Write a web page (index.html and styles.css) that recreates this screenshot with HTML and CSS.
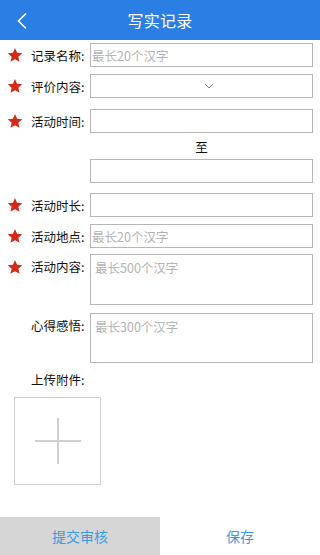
FILE: index.html
```
<!DOCTYPE html>
<html lang="zh">
<head>
<meta charset="utf-8">
<link rel="stylesheet" href="styles.css">
</head>
<body>
<div class="page">
  <header class="topbar">
    <svg class="back" width="12" height="18" viewBox="0 0 12 18"><path d="M10 1.5 L2.5 9 L10 16.5" fill="none" stroke="#fff" stroke-width="1.6"/></svg>
    <div class="title">写实记录</div>
  </header>
  <main class="form">
    <div class="row r1">
      <div class="label"><svg class="star" viewBox="0 0 24 24"><path d="M12 1.5l3.1 7.2 7.8.7-5.9 5.2 1.8 7.7L12 18.2l-6.8 4.1 1.8-7.7-5.9-5.2 7.8-.7z" fill="#d42a1c"/></svg><span>记录名称:</span></div>
      <div class="field"><span class="ph">最长20个汉字</span></div>
    </div>
    <div class="row r2">
      <div class="label"><svg class="star" viewBox="0 0 24 24"><path d="M12 1.5l3.1 7.2 7.8.7-5.9 5.2 1.8 7.7L12 18.2l-6.8 4.1 1.8-7.7-5.9-5.2 7.8-.7z" fill="#d42a1c"/></svg><span>评价内容:</span></div>
      <div class="field select"><svg width="10" height="6" viewBox="0 0 10 6"><path d="M1 1 L5 5 L9 1" fill="none" stroke="#8a8a8a" stroke-width="1"/></svg></div>
    </div>
    <div class="row r3">
      <div class="label"><svg class="star" viewBox="0 0 24 24"><path d="M12 1.5l3.1 7.2 7.8.7-5.9 5.2 1.8 7.7L12 18.2l-6.8 4.1 1.8-7.7-5.9-5.2 7.8-.7z" fill="#d42a1c"/></svg><span>活动时间:</span></div>
      <div class="field"></div>
    </div>
    <div class="row zhi">
      <div class="label"></div>
      <div class="to">至</div>
    </div>
    <div class="row r4">
      <div class="label"></div>
      <div class="field"></div>
    </div>
    <div class="row r5">
      <div class="label"><svg class="star" viewBox="0 0 24 24"><path d="M12 1.5l3.1 7.2 7.8.7-5.9 5.2 1.8 7.7L12 18.2l-6.8 4.1 1.8-7.7-5.9-5.2 7.8-.7z" fill="#d42a1c"/></svg><span>活动时长:</span></div>
      <div class="field"></div>
    </div>
    <div class="row r6">
      <div class="label"><svg class="star" viewBox="0 0 24 24"><path d="M12 1.5l3.1 7.2 7.8.7-5.9 5.2 1.8 7.7L12 18.2l-6.8 4.1 1.8-7.7-5.9-5.2 7.8-.7z" fill="#d42a1c"/></svg><span>活动地点:</span></div>
      <div class="field"><span class="ph">最长20个汉字</span></div>
    </div>
    <div class="row ta1">
      <div class="label top"><svg class="star" viewBox="0 0 24 24"><path d="M12 1.5l3.1 7.2 7.8.7-5.9 5.2 1.8 7.7L12 18.2l-6.8 4.1 1.8-7.7-5.9-5.2 7.8-.7z" fill="#d42a1c"/></svg><span>活动内容:</span></div>
      <div class="field area"><span class="ph">最长500个汉字</span></div>
    </div>
    <div class="row ta2">
      <div class="label top"><span class="nostar"></span><span>心得感悟:</span></div>
      <div class="field area"><span class="ph">最长300个汉字</span></div>
    </div>
    <div class="upload-label">上传附件:</div>
    <div class="upload">
      <span class="plus-h"></span><span class="plus-v"></span>
    </div>
  </main>
  <footer class="bottombar">
    <div class="btn submit">提交审核</div>
    <div class="btn save">保存</div>
  </footer>
</div>
</body>
</html>
```
FILE: styles.css
```
html, body {
  margin: 0;
  padding: 0;
  background: #fff;
}
body {
  font-family: "Noto Sans CJK SC", "Noto Sans", sans-serif;
  color: #111;
}
.page {
  width: 320px;
  height: 555px;
  display: flex;
  flex-direction: column;
  overflow: hidden;
}
.topbar {
  height: 40px;
  flex: none;
  background: #2b7fe4;
  display: flex;
  align-items: center;
  justify-content: center;
  position: relative;
}
.back {
  position: absolute;
  left: 16px;
  top: 12px;
}
.title {
  color: #fff;
  font-size: 16px;
  letter-spacing: 0.3px;
}
.form {
  flex: 1;
  display: flex;
  flex-direction: column;
}
.row {
  display: flex;
  align-items: center;
  padding-right: 7px;
}
.label {
  width: 90px;
  flex: none;
  display: flex;
  align-items: center;
  font-size: 12.5px;
  color: #111;
  box-sizing: border-box;
  padding-left: 7px;
}
.label.top {
  align-self: flex-start;
  padding-top: 3px;
}
.star {
  width: 16px;
  height: 16px;
  margin-right: 8px;
  flex: none;
}
.nostar {
  width: 16px;
  margin-right: 8px;
  flex: none;
}
.field {
  flex: 1;
  height: 24px;
  box-sizing: border-box;
  border: 1.5px solid #b7b7b7;
  display: flex;
  align-items: center;
  padding-left: 1px;
}
.ph {
  color: #b4b4b4;
  font-size: 12.5px;
}
.select {
  justify-content: center;
  padding-left: 0;
  padding-right: 0;
}
.select svg {
  margin-left: 14px;
}
.area {
  align-items: flex-start;
  padding-left: 4px;
  padding-top: 3px;
}
.r1 { margin-top: 3px; }
.r2 { margin-top: 7px; }
.r3 { margin-top: 11px; }
.zhi { height: 26px; }
.to {
  flex: 1;
  text-align: center;
  font-size: 12.5px;
  color: #111;
}
.r5 { margin-top: 10px; }
.r6 { margin-top: 7px; }
.ta1 { margin-top: 6px; }
.ta1 .field { height: 51px; }
.ta2 { margin-top: 8px; }
.ta2 .field { height: 50px; }
.upload-label {
  margin-top: 7px;
  padding-left: 31px;
  font-size: 12.5px;
  color: #111;
  height: 20px;
  line-height: 20px;
}
.upload {
  margin-top: 7px;
  margin-left: 14px;
  width: 87px;
  height: 88px;
  box-sizing: border-box;
  border: 1px solid #cfcfcf;
  position: relative;
}
.plus-h {
  position: absolute;
  left: 20px;
  top: 42px;
  width: 46px;
  height: 2px;
  background: #d0d0d0;
}
.plus-v {
  position: absolute;
  left: 42px;
  top: 20px;
  width: 2px;
  height: 46px;
  background: #d0d0d0;
}
.bottombar {
  flex: none;
  height: 38px;
  display: flex;
}
.btn {
  flex: 1;
  display: flex;
  align-items: center;
  justify-content: center;
  font-size: 14px;
  color: #3a9ae0;
}
.submit {
  background: #d6d6d6;
}
.save {
  background: #fff;
}
```
